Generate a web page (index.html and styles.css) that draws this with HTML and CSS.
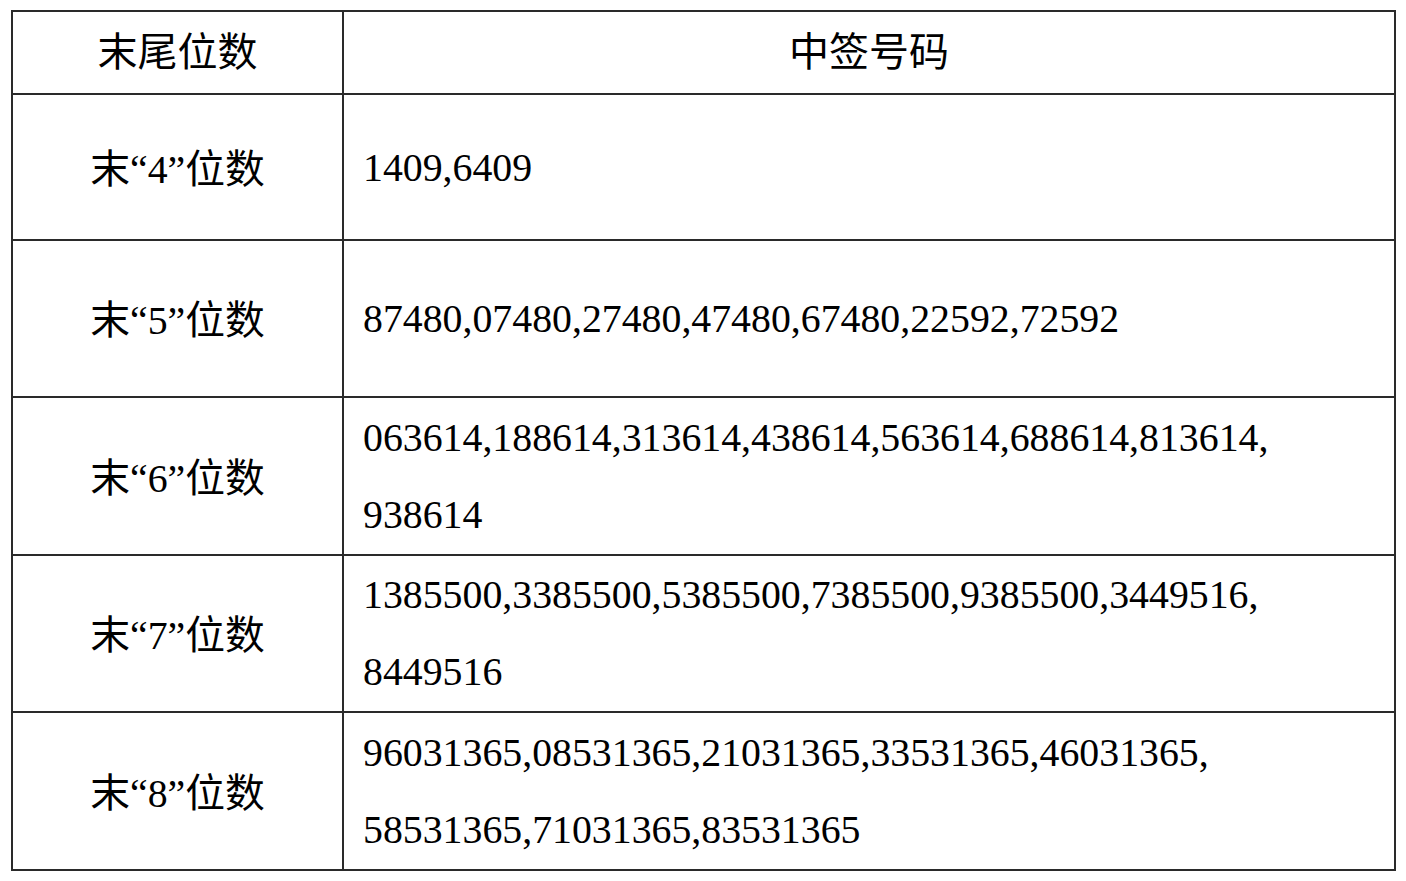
FILE: index.html
```html
<!DOCTYPE html>
<html lang="zh-CN">
<head>
<meta charset="utf-8">
<title>中签号码</title>
<link rel="stylesheet" href="styles.css">
</head>
<body>
<div class="wrap">
<table class="lottery">
  <colgroup><col class="c1"><col class="c2"></colgroup>
  <tr class="r-head"><th>末尾位数</th><th>中签号码</th></tr>
  <tr class="r-a"><td class="k">末“4”位数</td><td class="v">1409,6409</td></tr>
  <tr class="r-b"><td class="k">末“5”位数</td><td class="v">87480,07480,27480,47480,67480,22592,72592</td></tr>
  <tr class="r-two"><td class="k">末“6”位数</td><td class="v">063614,188614,313614,438614,563614,688614,813614,<br>938614</td></tr>
  <tr class="r-two r-mid"><td class="k">末“7”位数</td><td class="v">1385500,3385500,5385500,7385500,9385500,3449516,<br>8449516</td></tr>
  <tr class="r-two"><td class="k">末“8”位数</td><td class="v">96031365,08531365,21031365,33531365,46031365,<br>58531365,71031365,83531365</td></tr>
</table>
</div>
</body>
</html>
```

FILE: styles.css
```css
html, body {
  margin: 0;
  padding: 0;
  background: #ffffff;
}
.wrap {
  padding: 10px 0 0 11px;
}
.lottery {
  border-collapse: collapse;
  width: 1385px;
  table-layout: fixed;
  font-family: "Liberation Serif", "Noto Sans CJK SC", serif;
  font-size: 39.8px;
  color: #000;
}
.c1 { width: 331px; }
.lottery th,
.lottery td {
  border: 2px solid #2a2a2a;
  padding: 0 0 4px 0;
  vertical-align: middle;
  font-weight: normal;
}
.lottery th {
  text-align: center;
  font-family: "Noto Sans CJK SC", sans-serif;
  font-size: 40px;
  line-height: 1.2;
  padding-bottom: 8px;
}
.r-head th { height: 73px; }
.r-a td { height: 140px; }
.r-b td { height: 151px; }
.r-two td { height: 150px; }
.k {
  text-align: center;
}
.lottery td.v {
  text-align: left;
  padding: 2px 0 0 19px;
  line-height: 77px;
}
.lottery .r-mid td.v {
  padding-top: 1px;
}
```
